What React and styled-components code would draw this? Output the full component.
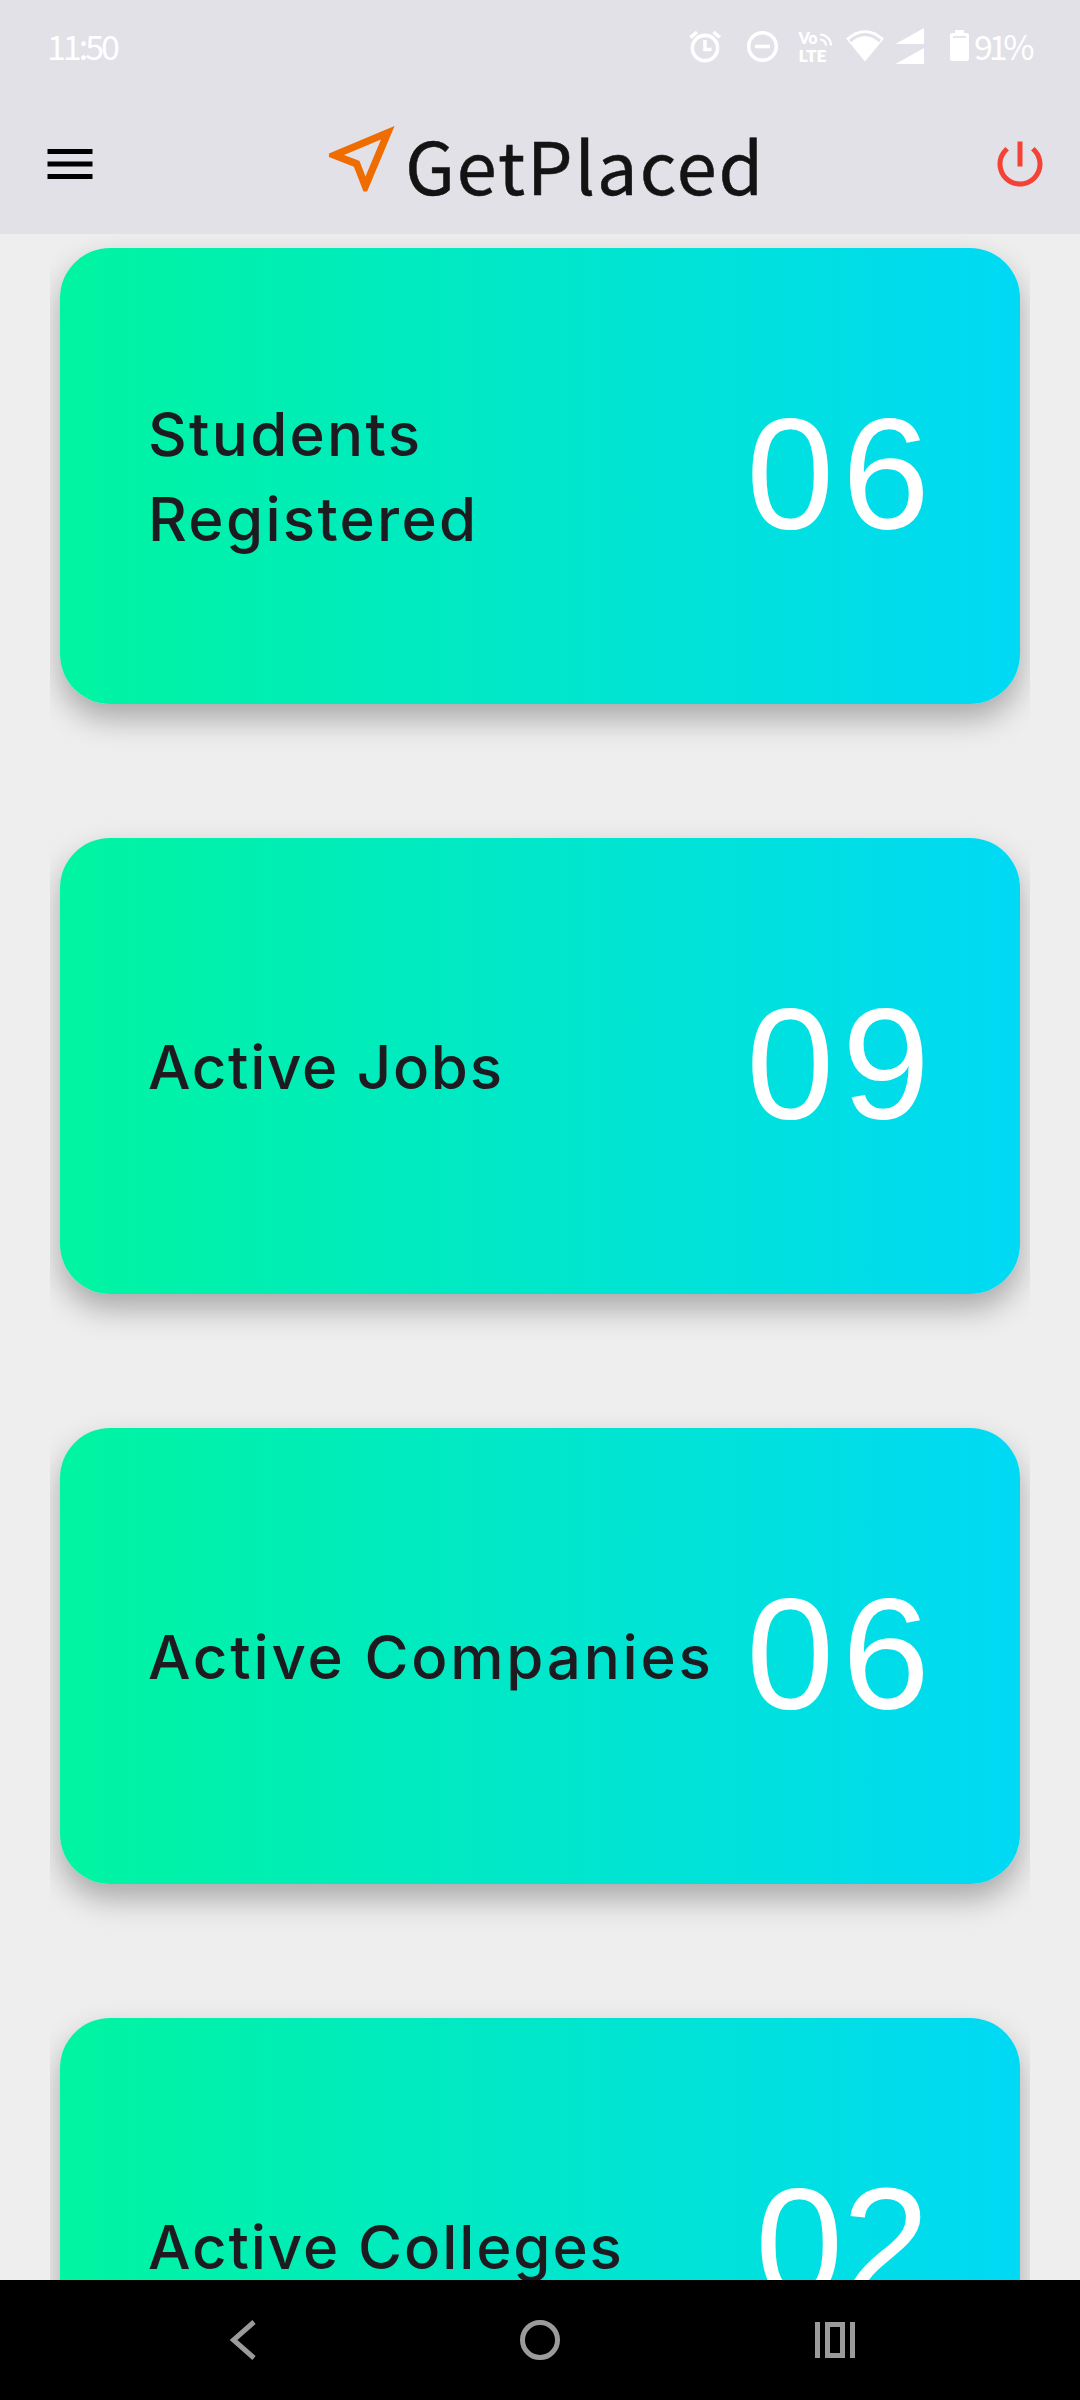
import React from "react";
import styled, { createGlobalStyle } from "styled-components";

const Global = createGlobalStyle`
  * { box-sizing: border-box; }
  body { margin: 0; background: #eeeeee; }
`;

const Screen = styled.div`
  width: 1080px;
  height: 2400px;
  display: flex;
  flex-direction: column;
  overflow: hidden;
  background: #eeeeee;
  font-family: Inter, sans-serif;
`;

const Header = styled.header`
  flex: none;
  height: 234px;
  background: #e2e1e8;
`;

const StatusBar = styled.div`
  height: 94px;
  display: flex;
  justify-content: space-between;
  padding: 0 46px 0 47px;
`;

const StatusText = styled.span`
  width: ${(p) => p.$width}px;
  font: 400 34px/92px "Noto Sans CJK SC", sans-serif;
  color: #fff;
  letter-spacing: ${(p) => p.$spacing}px;
  white-space: nowrap;
`;

const StatusIcons = styled.div`
  display: flex;
`;

const StatusGlyphs = styled.svg`
  display: block;
  flex: none;
`;

const AppBar = styled.div`
  height: 140px;
  display: flex;
  justify-content: space-between;
  padding: 0 30px 0 40px;
`;

const IconButton = styled.button`
  width: 60px;
  height: 60px;
  margin-top: 40px;
  padding: 0;
  border: 0;
  background: none;
  color: ${(p) => p.$color};
`;

const Icon = styled.svg`
  display: block;
  width: ${(p) => p.$size}px;
  height: ${(p) => p.$size}px;
  fill: currentColor;
`;

const Brand = styled.div`
  display: flex;
  color: #ee6c00;
  padding-top: 21px;
`;

const BrandName = styled.h1`
  margin: -3px 0 0;
  width: 367px;
  font: 400 72px/104px "Noto Sans CJK SC", sans-serif;
  letter-spacing: 2px;
  color: #131313;
  -webkit-text-stroke: 0.5px #131313;
  white-space: nowrap;
`;

const Content = styled.main`
  flex: 1;
  min-height: 0;
  overflow: hidden;
  padding: 0 50px;
`;

const List = styled.div`
  display: flex;
  flex-direction: column;
  gap: 134px;
  padding: 14px 10px 0;
  overflow: hidden;
`;

const Card = styled.section`
  flex: none;
  height: 456px;
  display: flex;
  align-items: center;
  justify-content: space-between;
  padding: 0 90px 0 88px;
  border-radius: 50px;
  background: linear-gradient(90deg, #00f5a0, #00d9f5);
  box-shadow: 0 15px 30px rgba(0, 0, 0, 0.29);
`;

const Label = styled.h2`
  margin: 0;
  width: 0;
  white-space: pre;
  font-size: 60px;
  font-weight: 500;
  line-height: 85px;
  letter-spacing: ${(p) => p.$spacing}px;
  color: #1d1b20;
  padding-top: 2px;
`;

const Count = styled.span`
  font: 400 158px/180px "Liberation Sans", Arial, sans-serif;
  letter-spacing: ${(p) => p.$spacing}px;
  margin-right: ${(p) => -p.$spacing}px;
  padding-bottom: 6px;
  color: #fff;
`;

const NavBar = styled.nav`
  flex: none;
  height: 120px;
  display: flex;
  align-items: center;
  justify-content: space-between;
  padding: 0 215px;
  background: #000;
`;

const NavIcon = styled.svg`
  width: 60px;
  height: 60px;
  fill: none;
  stroke: #9b9b9b;
  stroke-width: 5;
`;

const cards = [
  { label: "Students\nRegistered", count: "06", spacing: 2.3, countSpacing: 8 },
  { label: "Active Jobs", count: "09", spacing: 1.7, countSpacing: 8 },
  { label: "Active Companies", count: "06", spacing: 2.8, countSpacing: 8 },
  { label: "Active Colleges", count: "02", spacing: 1.9, countSpacing: -1 },
];

export default function App() {
  return (
    <Screen>
      <Global />
      <Header>
        <StatusBar>
          <StatusText $width={80} $spacing={-3}>11:50</StatusText>
          <StatusIcons>
            <StatusGlyphs width="290" height="94" viewBox="684 0 290 94" fill="#fff">
              <g fill="none" stroke="#fff" strokeWidth="3.6">
                <circle cx="705" cy="48" r="12.6" />
                <path d="M705 40v9.500h6.500M690.500 37.500l6.500-5.500M720 37.500l-6.500-5.500" />
                <circle cx="762.500" cy="46.500" r="13.800" />
                <path d="M755 46.500h15" />
              </g>
              <text x="798.500" y="43.500" fontFamily="Lato, sans-serif" fontWeight="800" fontSize="16" textLength="19">Vo</text>
              <text x="798.500" y="61.500" fontFamily="Lato, sans-serif" fontWeight="800" fontSize="17.500" textLength="28">LTE</text>
              <path d="M820 34.500a11 11 0 0 1 11 11M820 39.500a6 6 0 0 1 6 6" fill="none" stroke="#fff" strokeWidth="2.200" />
              <path d="M846 38.500Q865 22 884 38.500L865 61.500Z" />
              <path d="M850 41Q865 28 880 41" fill="none" stroke="#e2e1e8" strokeWidth="3" />
              <path d="M924 28v16h-28.500zM924 48v16h-28.500z" />
              <path d="M955 33v-3h9v3h3q2 0 2 2v24q0 2-2 2h-15q-2 0-2-2v-24q0-2 2-2z" />
              <path d="M953 37h13" stroke="#e2e1e8" strokeWidth="1.800" />
            </StatusGlyphs>
            <StatusText $width={60} $spacing={-4.2}>91%</StatusText>
          </StatusIcons>
        </StatusBar>
        <AppBar>
          <IconButton $color="#000" aria-label="Menu">
            <Icon $size={60} viewBox="0 0 24 24">
              <path d="M3 18h18v-2H3v2zm0-5h18v-2H3v2zm0-7v2h18V6H3z" />
            </Icon>
          </IconButton>
          <Brand>
            <Icon $size={87.5} viewBox="0 0 24 24">
              <path d="M17.270 6.730l-4.240 10.130-1.320-3.420-.32-.83-.82-.32-3.430-1.330 10.130-4.230M21 3L3 10.530v.98l6.840 2.650L12.480 21h.98L21 3z" />
            </Icon>
            <BrandName>GetPlaced</BrandName>
          </Brand>
          <IconButton $color="#f44336" aria-label="Log out">
            <Icon $size={60} viewBox="0 0 24 24">
              <path d="M13 3h-2v10h2V3zm4.830 2.170l-1.420 1.420C17.990 7.860 19 9.810 19 12c0 3.870-3.130 7-7 7s-7-3.130-7-7c0-2.190 1.010-4.140 2.580-5.420L6.170 5.170C4.230 6.820 3 9.260 3 12c0 4.970 4.030 9 9 9s9-4.030 9-9c0-2.740-1.230-5.180-3.170-6.830z" />
            </Icon>
          </IconButton>
        </AppBar>
      </Header>
      <Content>
        <List>
          {cards.map((c) => (
            <Card key={c.label}>
              <Label $spacing={c.spacing}>{c.label}</Label>
              <Count $spacing={c.countSpacing}>{c.count}</Count>
            </Card>
          ))}
        </List>
      </Content>
      <NavBar>
        <NavIcon viewBox="0 0 60 60">
          <path d="M39 12L18.500 30l20.500 18" />
        </NavIcon>
        <NavIcon viewBox="0 0 60 60">
          <circle cx="30" cy="30" r="17.5" />
        </NavIcon>
        <NavIcon viewBox="0 0 60 60">
          <path d="M12.500 12v36M47.500 12v36M22.500 14.500h15v31h-15z" />
        </NavIcon>
      </NavBar>
    </Screen>
  );
}
